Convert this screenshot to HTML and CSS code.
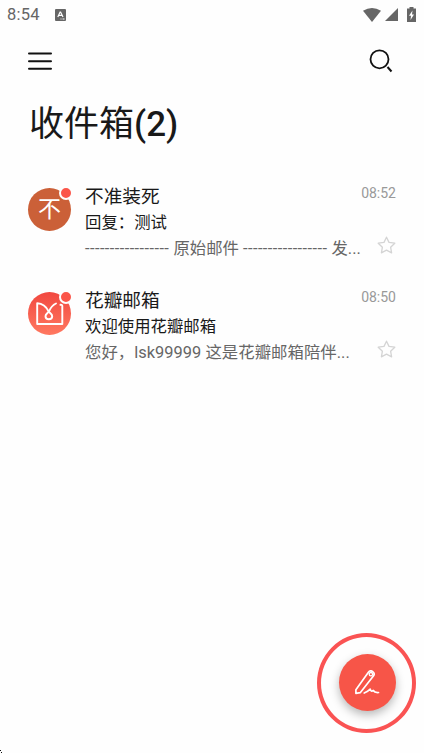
FILE: index.html
```html
<!DOCTYPE html>
<html lang="zh-CN">
<head>
<meta charset="utf-8">
<title>收件箱</title>
<link rel="stylesheet" href="styles.css">
</head>
<body>
<div class="screen">
  <header class="status">
    <span class="clock">8:54</span>
    <svg class="keyboard" width="11" height="12" viewBox="0 0 11 12"><rect width="11" height="12" rx="1" fill="#666"/><path d="M2.8 8 5.1 3h.5L8 8M3.7 6.3H7M5.5 10h1M7.5 10h2" fill="none" stroke="#fff" stroke-width="1.2"/></svg>
    <div class="signals">
      <svg width="18" height="14" viewBox="0 0 18 14"><path d="M0 2.7Q9-2.5 18 2.7L9 14Z" fill="#666"/></svg>
      <svg width="13" height="13" viewBox="0 0 13 13"><path d="M13 0V13H0Z" fill="#666"/></svg>
      <svg width="9" height="15" viewBox="0 0 9 15"><path d="M2.5 0h4v1.5H9V15H0V1.5h2.5Z" fill="#666"/><path d="M5.500 3.500 2 8.700h2L3.500 13 7 7.400H5Z" fill="#fff"/></svg>
    </div>
  </header>
  <nav class="toolbar">
    <svg width="24" height="20" viewBox="0 0 24 20"><path d="M1 2.4H23M1 10.2H23M1 17.8H23" stroke="#111" stroke-width="2" stroke-linecap="round"/></svg>
    <svg width="24" height="24" viewBox="0 0 24 24" fill="none" stroke="#111" stroke-width="1.8"><circle cx="10.5" cy="10.3" r="9"/><path d="m18.500 18 4 4.500" stroke-width="2"/></svg>
  </nav>
  <h1 class="title">收件箱<span class="count">(2)</span></h1>
  <main class="mails">
    <article class="mail">
      <div class="avatar avatar-letter">不<i class="unread"></i></div>
      <div class="body">
        <div class="name">不准装死</div>
        <div class="subject">回复：测试</div>
        <div class="preview"><span class="rule">-----------------</span> 原始邮件 <span class="rule">-----------------</span> 发...</div>
      </div>
      <div class="side">
        <time>08:52</time>
        <svg class="star" width="19" height="18" viewBox="0 0 19 18"><path d="m9.5 1.2 2.5 5.2 5.8.8-4.2 4 1 5.6-5.1-2.6-5.1 2.6 1-5.6-4.2-4 5.8-.8Z"/></svg>
      </div>
    </article>
    <article class="mail">
      <div class="avatar avatar-brand">
        <svg width="43" height="43" viewBox="0 0 43 43" fill="none" stroke="#fff" stroke-width="1.9" stroke-linejoin="round" stroke-linecap="round"><path d="M32.500 12.800Q34.300 12.600 34.300 14V32H9.200V11.200C15 11.500 18.500 15 20.500 19.300C22 21.500 24.200 22 24.200 24.200C24.200 28.300 17.500 28.300 17.500 24.200C17.500 22 19.500 21.500 21 19.300Q23.500 13.500 28 11.500"/></svg>
        <i class="unread unread-plain"></i>
      </div>
      <div class="body">
        <div class="name">花瓣邮箱</div>
        <div class="subject">欢迎使用花瓣邮箱</div>
        <div class="preview preview-welcome">您好，lsk99999 这是花瓣邮箱陪伴...</div>
      </div>
      <div class="side">
        <time>08:50</time>
        <svg class="star" width="19" height="18" viewBox="0 0 19 18"><path d="m9.5 1.2 2.5 5.2 5.8.8-4.2 4 1 5.6-5.1-2.6-5.1 2.6 1-5.6-4.2-4 5.8-.8Z"/></svg>
      </div>
    </article>
  </main>
  <div class="ring">
    <button class="compose" aria-label="写邮件">
      <svg width="25" height="25" viewBox="0 0 25 25" fill="none" stroke="#fff" stroke-width="1.7" stroke-linejoin="round" stroke-linecap="round"><path d="M.9 19.800 13.400 2.300A3.100 3.100 0 0 1 18.400 6L5.200 22.700.9 23.400Z"/><circle cx="15.900" cy="4.200" r="1.700" stroke-width="1.300"/><path d="M9.200 23Q13 21.500 15.200 19.200 16 22 18.300 20.500 19.500 22.800 23.500 22.500"/></svg>
    </button>
  </div>
  <svg class="corner" width="3" height="3" viewBox="0 0 3 3"><path d="M0 0h1v1H0ZM1 2h1v1H1Z" fill="#111"/></svg>
</div>
</body>
</html>
```
FILE: styles.css
```css
* { box-sizing: border-box; }
body { margin: 0; background: #fefefe; font-family: Roboto, "Noto Sans CJK SC", sans-serif; color: #191919; }
.screen { position: relative; width: 424px; height: 753px; overflow: hidden; }
svg { display: block; flex: none; }
.status { display: flex; align-items: center; height: 29px; padding: 0 8px 0 7px; color: #666; }
.clock { width: 48px; font-size: 16.5px; line-height: 29px; letter-spacing: .2px; }
.signals { display: flex; align-items: center; gap: 4px; margin-left: auto; }
.signals svg:last-child { margin-left: 5px; }
.toolbar { display: flex; justify-content: space-between; align-items: center; height: 64px; padding: 0 31px 0 28px; }
.title { height: 60px; margin: 0; padding: 2px 0 0 29px; font-size: 35px; font-weight: 400; line-height: 60px; white-space: nowrap; }
.count { font-weight: 500; }
.mails { padding: 30px 28px 0; }
.mail { display: flex; height: 104px; }
.avatar { position: relative; flex: none; width: 43px; height: 43px; margin-top: 5px; border-radius: 50%; }
.avatar-letter { background: #cb6038; color: #fff; font-size: 23px; line-height: 44px; text-align: center; }
.avatar-brand { background: linear-gradient(#f14840, #ff7860); }
.unread { position: absolute; top: -2px; right: -2px; width: 14px; height: 14px; border: 2px solid #fefefe; border-radius: 50%; background: #fb5549; }
.body { width: 276px; margin-left: 14px; padding-top: 1px; white-space: nowrap; }
.name { font-size: 18.7px; line-height: 26px; }
.subject { font-size: 16.4px; line-height: 26px; }
.preview { color: #666; font-size: 16.4px; line-height: 26px; }
.rule { letter-spacing: .43px; }
.preview-welcome { letter-spacing: .03px; }
.side { display: flex; flex: 1; flex-direction: column; align-items: flex-end; }
time { color: #999; font-size: 14px; line-height: 20px; }
.star { margin-top: 33px; fill: none; stroke: #d4d4d4; stroke-width: 1.3; stroke-linejoin: round; }
.ring { position: absolute; left: 317px; top: 633px; display: flex; align-items: center; justify-content: center; width: 99px; height: 100px; padding: 0 0 2px 2px; border: 4px solid #fa5353; border-radius: 50%; }
.compose { display: flex; align-items: center; justify-content: center; width: 57px; height: 57px; padding: 0; border: 0; border-radius: 50%; background: #f75548; box-shadow: 0 4px 10px rgba(0, 0, 0, .28); }
.corner { position: absolute; left: 0; bottom: 0; }
```
